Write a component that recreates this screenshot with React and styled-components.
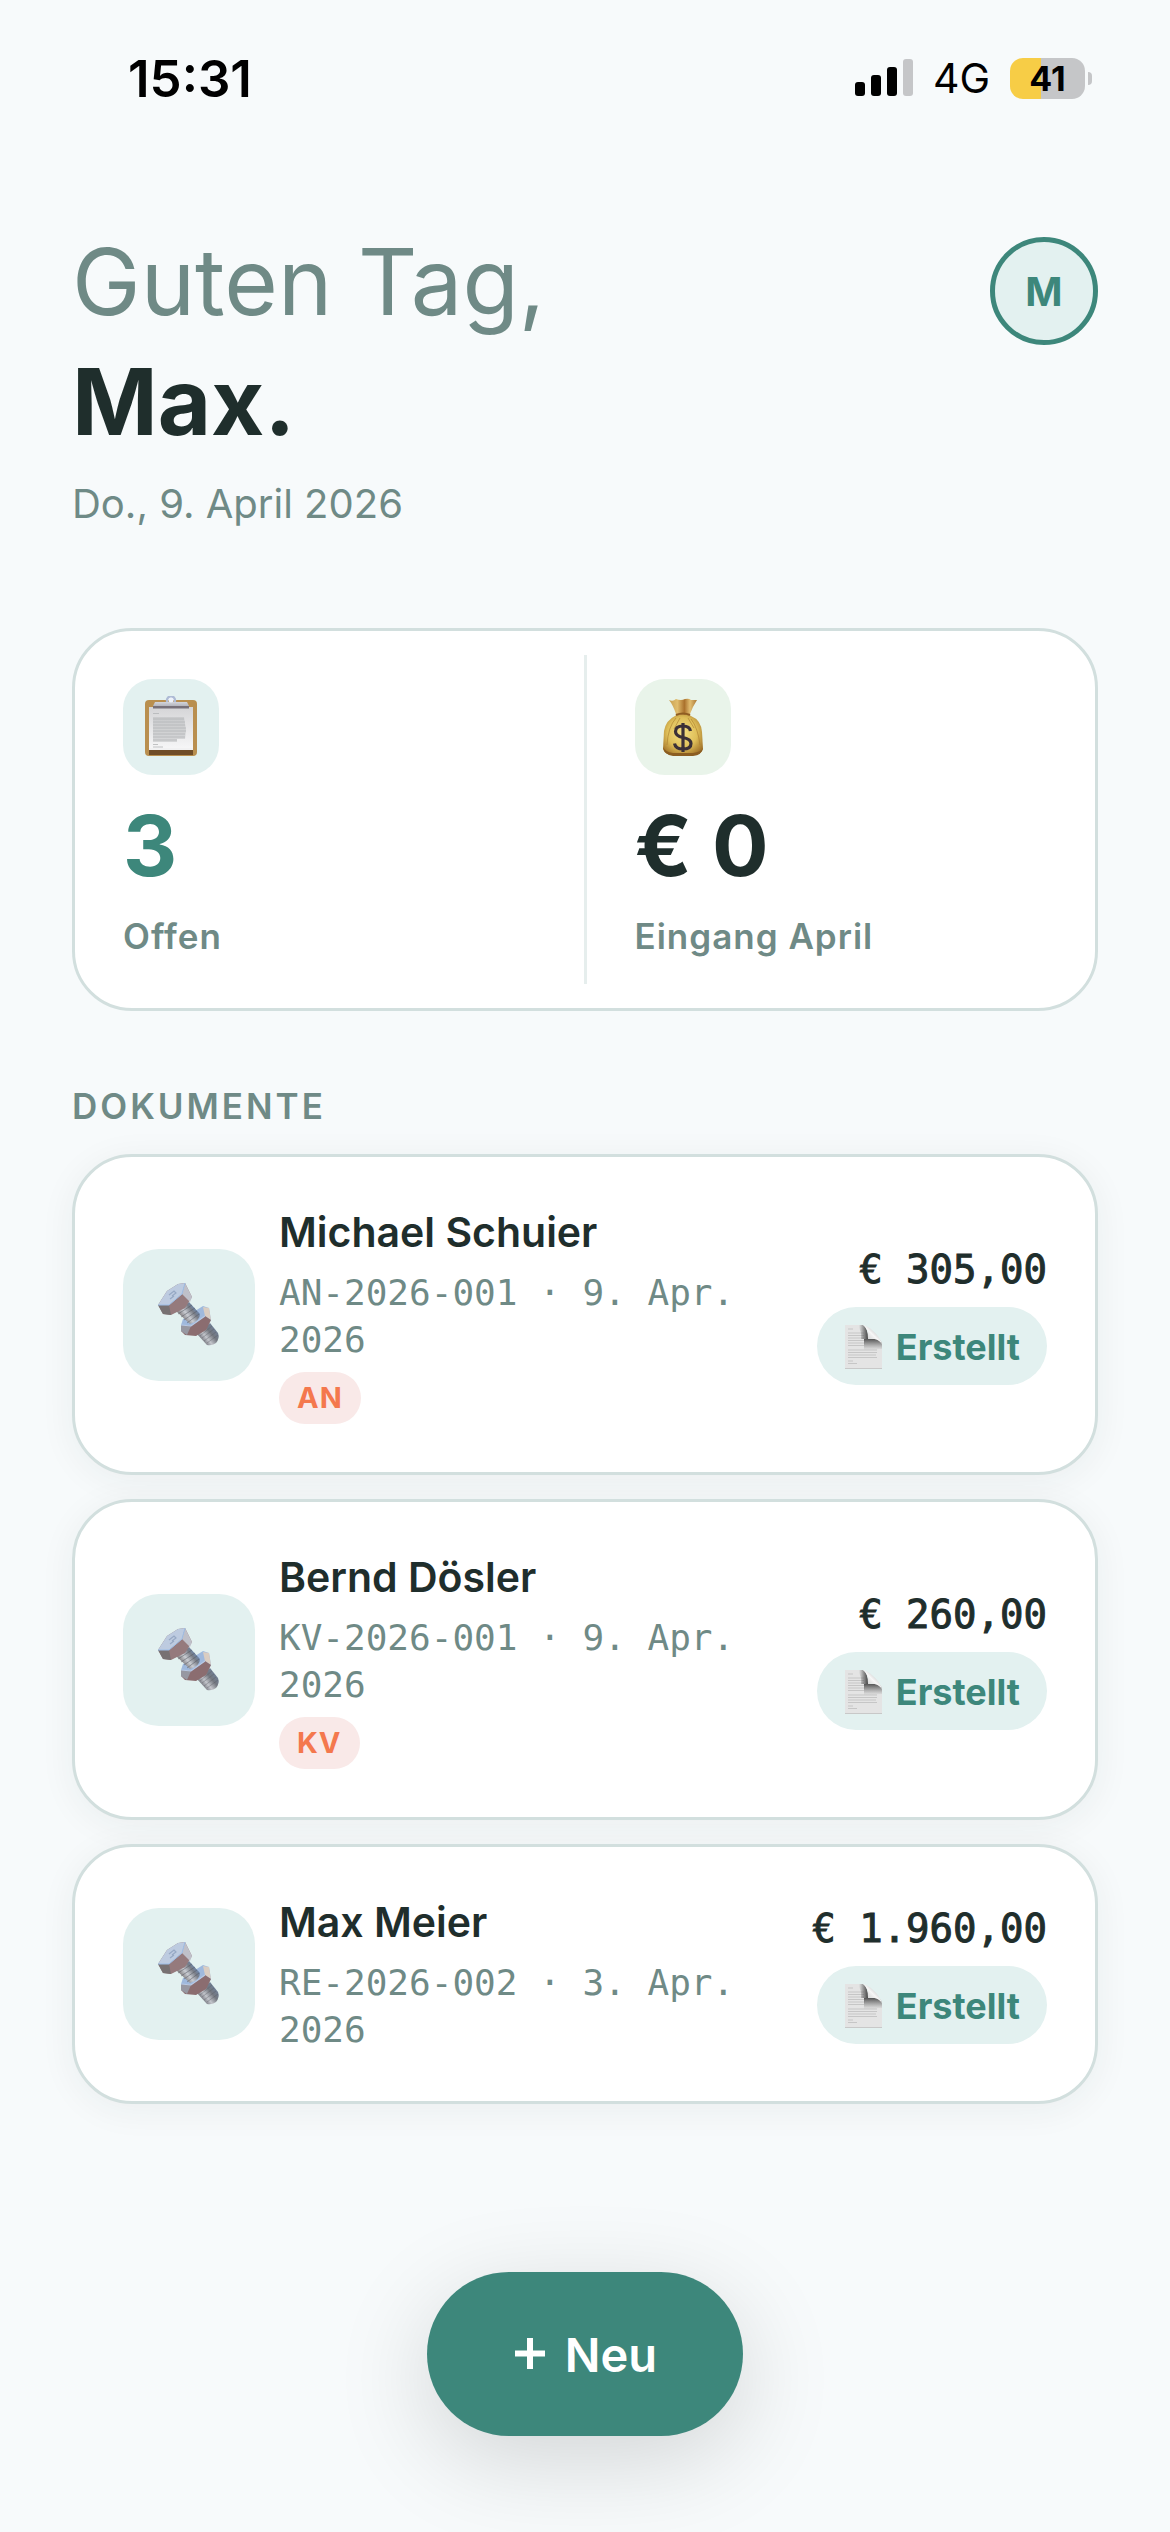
import React from 'react';
import styled, { createGlobalStyle } from 'styled-components';

const color = {
  page: '#f7fafb',
  card: '#ffffff',
  line: '#d2dfde',
  divider: '#e6eeed',
  ink: '#1f2e2c',
  muted: '#6f8a86',
  teal: '#3d877b',
  mint: '#e3f1f0',
  green: '#e9f4ea',
  orange: '#f4784d',
  blush: '#f9e9e8',
};

const sans = "Inter, 'Open Sans', sans-serif";
const mono = "'DejaVu Sans Mono', 'Liberation Mono', monospace";

const GlobalStyle = createGlobalStyle`
  *, *::before, *::after { box-sizing: border-box; }
  body {
    margin: 0;
    background: ${color.page};
    color: ${color.ink};
    font-family: ${sans};
    -webkit-font-smoothing: antialiased;
  }
  h1, h2, h3, p, ul { margin: 0; padding: 0; }
  ul { list-style: none; }
`;

const Screen = styled.div`
  display: flex;
  flex-direction: column;
  min-height: 100vh;
  padding-bottom: 96px;
`;

const StatusBar = styled.div`
  display: flex;
  align-items: center;
  justify-content: space-between;
  height: 156px;
  padding: 0 78px 0 128px;
  color: #000;
`;

const Clock = styled.time`
  font-size: 51px;
  font-weight: 600;
`;

const StatusIcons = styled.div`
  display: flex;
  align-items: center;
  gap: 20px;
`;

const Network = styled.span`
  font-size: 41px;
  line-height: 48px;
`;

const Battery = styled.div`
  display: flex;
  align-items: center;
  gap: 3px;
`;

const BatteryBody = styled.div`
  width: 75px;
  height: 41px;
  border-radius: 13px;
  background: linear-gradient(to right, #f7cd46 41%, #c5c6c8 41%);
  font-size: 34px;
  font-weight: 700;
  line-height: 41px;
  text-align: center;
`;

const BatteryTip = styled.div`
  width: 4px;
  height: 13px;
  border-radius: 0 6px 6px 0;
  background: #c5c6c8;
`;

const Main = styled.main`
  display: flex;
  flex-direction: column;
  padding: 66px 72px 0;
`;

const Header = styled.header`
  display: flex;
  align-items: flex-start;
  justify-content: space-between;
`;

const Greeting = styled.h1`
  color: ${color.muted};
  font-size: 92px;
  font-weight: 400;
  line-height: 120px;
`;

const GreetingName = styled.strong`
  display: block;
  color: ${color.ink};
  font-weight: 700;
`;

const Today = styled.p`
  margin-top: 12px;
  color: ${color.muted};
  font-size: 40px;
  line-height: 60px;
`;

const Avatar = styled.button`
  width: 108px;
  height: 108px;
  margin-top: 15px;
  padding: 0;
  border: 5px solid ${color.teal};
  border-radius: 50%;
  background: ${color.mint};
  color: ${color.teal};
  font: 700 40px ${sans};
`;

const Card = styled.div`
  border: 3px solid ${color.line};
  border-radius: 60px;
  background: ${color.card};
`;

const Stats = styled(Card)`
  display: grid;
  grid-template-columns: 1fr 3px 1fr;
  margin-top: 94px;
  padding: 24px 0;
`;

const StatDivider = styled.div`
  background: ${color.divider};
`;

const Stat = styled.section`
  display: flex;
  flex-direction: column;
  padding: 24px 48px;
`;

const IconTile = styled.div`
  display: flex;
  flex: none;
  align-items: center;
  justify-content: center;
  width: ${(p) => p.$size}px;
  height: ${(p) => p.$size}px;
  border-radius: ${(p) => (p.$size > 100 ? 36 : 30)}px;
  background: ${(p) => p.$tone || color.mint};
`;

const StatValue = styled.p`
  margin-top: 24px;
  color: ${(p) => p.$tone || color.ink};
  font-size: 84px;
  font-weight: 700;
  line-height: 94px;
`;

const StatLabel = styled.h2`
  margin-top: 19px;
  color: ${color.muted};
  font-size: 35px;
  font-weight: 600;
  line-height: 48px;
  letter-spacing: 1px;
`;

const SectionTitle = styled.h2`
  margin-top: 72px;
  color: ${color.muted};
  font-size: 35px;
  font-weight: 600;
  line-height: 47px;
  letter-spacing: 3px;
`;

const DocumentList = styled.ul`
  display: flex;
  flex-direction: column;
  gap: 24px;
  margin-top: 24px;
`;

const DocumentCard = styled(Card).attrs({ as: 'li' })`
  display: flex;
  align-items: center;
  gap: 24px;
  padding: 48px;
  box-shadow: 0 6px 36px rgba(31, 46, 44, 0.06);
`;

const DocumentInfo = styled.div`
  flex: 1;
  min-width: 0;
`;

const Customer = styled.h3`
  font-size: 41px;
  font-weight: 600;
  line-height: 55px;
`;

const Reference = styled.p`
  margin-top: 9px;
  color: ${color.muted};
  font-family: ${mono};
  font-size: 36px;
  line-height: 47px;
`;

const KindBadge = styled.span`
  display: block;
  width: fit-content;
  margin-top: 9px;
  padding: 0 18px;
  border-radius: 26px;
  background: ${color.blush};
  color: ${color.orange};
  font-size: 29px;
  font-weight: 700;
  line-height: 52px;
  letter-spacing: 1px;
`;

const DocumentSide = styled.div`
  display: flex;
  flex: none;
  flex-direction: column;
  align-items: flex-end;
  gap: 12px;
`;

const Amount = styled.p`
  font-family: ${mono};
  font-size: 39px;
  line-height: 50px;
  white-space: nowrap;
  -webkit-text-stroke: 1px ${color.ink};
`;

const StatusPill = styled.span`
  display: flex;
  align-items: center;
  gap: 12px;
  height: 78px;
  padding: 2px 27px 0;
  border-radius: 39px;
  background: ${color.mint};
  color: ${color.teal};
  font-size: 36px;
  font-weight: 700;
`;

const Footer = styled.footer`
  display: flex;
  justify-content: center;
  margin-top: auto;
`;

const NewButton = styled.button`
  display: flex;
  align-items: center;
  gap: 18px;
  height: 164px;
  padding: 0 86px;
  border: 0;
  border-radius: 82px;
  background: ${color.teal};
  box-shadow: 0 24px 96px rgba(0, 0, 0, 0.15);
  color: #fff;
  font: 600 47px ${sans};
`;

function SignalIcon() {
  return (
    <svg width="58" height="38" viewBox="0 0 58 38" aria-hidden="true">
      <rect x="0" y="23" width="10" height="14" rx="3" />
      <rect x="16" y="16" width="10" height="21" rx="3" />
      <rect x="32" y="8" width="10" height="29" rx="3" />
      <rect x="48" y="0" width="10" height="37" rx="3" fill="#c5c6c8" />
    </svg>
  );
}

function PlusIcon() {
  return (
    <svg width="34" height="36" viewBox="0 0 34 36" aria-hidden="true">
      <path d="M17 2V33M2 17.500H32" stroke="currentColor" strokeWidth="6" />
    </svg>
  );
}

function ClipboardIcon() {
  return (
    <svg width="54" height="62" viewBox="0 -1 54 62" aria-hidden="true">
      <defs>
        <linearGradient id="clip-paper" x1="0" y1="0" x2="0" y2="1">
          <stop offset="0" stopColor="#d5d5d7" />
          <stop offset="1" stopColor="#f7f7f8" />
        </linearGradient>
        <linearGradient id="clip-metal" x1="0" y1="0" x2="0" y2="1">
          <stop offset="0" stopColor="#d3d5dc" />
          <stop offset="1" stopColor="#b4b5bd" />
        </linearGradient>
      </defs>
      <rect x="1" y="3" width="52" height="56" rx="4" fill="#b98f4f" />
      <path d="M5 53H49V58H5Z" fill="#704d28" />
      <path d="M5 10H49V53H5Z" fill="url(#clip-paper)" />
      <path d="M5 51H49V53H5Z" fill="#f1f1f2" />
      <path d="M9 20H40L42 33L41 42H33V45H9Z" fill="#b4b5b7" opacity=".45" />
      <path
        d="M9 16.500H15M9 22H40M9 25H41M9 28H41M9 31H42M9 34H42M9 37H41M9 40H41M9 43H33M9 47.500H14M9 50H19"
        stroke="#b4b6b8"
        strokeWidth="1"
        opacity=".8"
      />
      <circle cx="27" cy="3.500" r="4" fill="none" stroke="#aebbd5" strokeWidth="2.500" />
      <path d="M11 5H43L45 9H9Z" fill="url(#clip-metal)" />
      <circle cx="27" cy="3" r="2.500" fill="#eef2fa" />
      <path d="M9 9H45V11.500H9Z" fill="#77717a" />
    </svg>
  );
}

function MoneyBagIcon() {
  return (
    <svg width="44" height="60" viewBox="0 0 44 60" aria-hidden="true">
      <defs>
        <radialGradient id="bag-body" cx=".48" cy=".45" r=".62">
          <stop offset="0" stopColor="#f3df83" />
          <stop offset=".6" stopColor="#dfbf59" />
          <stop offset="1" stopColor="#a4752a" />
        </radialGradient>
        <linearGradient id="bag-neck">
          <stop offset="0" stopColor="#c79f51" />
          <stop offset=".3" stopColor="#e1bd6d" />
          <stop offset=".55" stopColor="#aa712c" />
          <stop offset=".75" stopColor="#e2be71" />
          <stop offset="1" stopColor="#ad7935" />
        </linearGradient>
      </defs>
      <path d="M8 3Q12 5 15 2Q20 4 24 2Q28 1 30 3L36 3Q32 9 29 17L30 21H14L15 17Q12 8 8 3Z" fill="url(#bag-neck)" />
      <path
        d="M14 19Q22 16 30 19Q40 23 41 35L42 52Q40 58 32 58H12Q4 58 2 52L3 34Q5 23 14 19Z"
        fill="url(#bag-body)"
      />
      <path d="M2 50Q4 55 12 56H32Q40 55 42 51Q41 58 32 59H12Q3 58 2 50Z" fill="#8b5d22" />
      <path d="M15 18Q22 15 29 18" fill="none" stroke="#8f5d22" strokeWidth="2" />
      <path d="M15 21Q7 30 6 48M19 21L13 32M27 21L33 31M30 22Q37 31 39 48" fill="none" stroke="#a97c2d" strokeWidth="1" opacity=".6" />
      <path
        d="M29.500 34Q28.500 29 22 29Q14.500 29 14.500 34.500Q14.500 39 22 40.500Q30 42 30 46.500Q30 52 22 52Q14.500 52 13.500 46.500M22 26V55"
        fill="none"
        stroke="#3b3037"
        strokeWidth="3.200"
      />
    </svg>
  );
}

function BoltIcon() {
  return (
    <svg width="62" height="64" viewBox="0 0 62 64" aria-hidden="true">
      <defs>
        <linearGradient id="bolt-tip" gradientUnits="userSpaceOnUse" x1="42" y1="58" x2="58" y2="45">
          <stop offset="0" stopColor="#5f6069" />
          <stop offset=".35" stopColor="#c3c5cb" />
          <stop offset=".65" stopColor="#747880" />
          <stop offset="1" stopColor="#6f8099" />
        </linearGradient>
        <linearGradient id="bolt-shaft" gradientUnits="userSpaceOnUse" x1="23" y1="37" x2="39" y2="24">
          <stop offset="0" stopColor="#6a6465" />
          <stop offset=".4" stopColor="#c9ccd2" />
          <stop offset=".7" stopColor="#797d86" />
          <stop offset="1" stopColor="#6789b8" />
        </linearGradient>
      </defs>
      <path d="M39 51L52 40L60 50Q62 55 58 60Q54 63 49 62Z" fill="url(#bolt-tip)" />
      <path d="M42 53L54 43M44 55L56 46M46 58L58 49M49 60L60 52" stroke="#55585f" strokeWidth=".7" opacity=".5" />
      <path d="M37 28L45 23L51 25L53 37L46 47L33 44L23 42L25 36Z" fill="#9fb9dd" />
      <path d="M45 24L51 25L53 37L47 33Z" fill="#dacdc2" />
      <path d="M18 28L31 19L42 31Q42 38 32 41Z" fill="url(#bolt-shaft)" />
      <path d="M20 31L34 22M23 34L37 25M26 37L39 28M29 40L41 31" stroke="#50545d" strokeWidth=".8" opacity=".6" />
      <path d="M23 42L33 43L47 33L53 37L48 47L38 53L27 52L23 48Z" fill="#8b6d70" />
      <path d="M23 42L33 43L29 52L23 48Z" fill="#9798a2" />
      <path d="M23 42L33 43L47 33" fill="none" stroke="#b8cae5" strokeWidth="1.200" />
      <path d="M0 22L9 8L20 1L27 0L34 14L27 25L13 32L5 31Z" fill="#957a7d" />
      <path d="M0 22L9 8L20 1L27 0L24 11L11 22Z" fill="#bdcbe0" />
      <path d="M27 0L34 14L32 19L24 11Z" fill="#bfc0c9" />
      <path d="M0 22L11 22L13 32L5 31Z" fill="#777172" />
      <path d="M0 22L11 22L24 11L27 0" fill="none" stroke="#9dbde6" strokeWidth="1" />
      <path d="M11 12L16 8L18 10L14 13M12 16L16 13" fill="none" stroke="#96a8c4" strokeWidth="1.200" />
    </svg>
  );
}

function PageIcon() {
  return (
    <svg width="40" height="46" viewBox="0 0 40 46" aria-hidden="true">
      <defs>
        <linearGradient id="page-curl" gradientUnits="userSpaceOnUse" x1="24" y1="15" x2="33" y2="6">
          <stop offset="0" stopColor="#d5d5d5" />
          <stop offset=".5" stopColor="#f7f7f7" />
          <stop offset="1" stopColor="#c4c4c4" />
        </linearGradient>
        <linearGradient id="page-shade-left" gradientUnits="userSpaceOnUse" x1="15" y1="0" x2="24" y2="0">
          <stop offset="0" stopColor="#444" stopOpacity="0" />
          <stop offset="1" stopColor="#444" />
        </linearGradient>
        <linearGradient id="page-shade-down" gradientUnits="userSpaceOnUse" x1="0" y1="15" x2="0" y2="26">
          <stop offset="0" stopColor="#555" />
          <stop offset="1" stopColor="#777" stopOpacity="0" />
        </linearGradient>
      </defs>
      <path d="M1 1H19Q23 2 24 15L34 15Q38 17 38 21V45H1Z" fill="#e4e4e4" />
      <path d="M1 44H38V45H1Z" fill="#c8c8c8" />
      <path
        d="M4 5H9M4 9H20M4 11.500H20M4 14H20M4 16.500H21M4 19H21M4 21.500H20M4 26H33M4 28.500H33M4 31H32M4 33.500H33M4 37H9M4 39.500H13"
        stroke="#c6c6c6"
        strokeWidth="1"
      />
      <path d="M13 1H19Q24 4 24 15H17Q18 7 13 1Z" fill="url(#page-shade-left)" />
      <path d="M20 15H33Q38 16 38 21V25L20 27Z" fill="url(#page-shade-down)" />
      <path d="M19 1Q25 5 24 15Q34 14 38 20Q36 13 29 7Q24 2 19 1Z" fill="url(#page-curl)" />
    </svg>
  );
}

const documents = [
  { customer: 'Michael Schuier', reference: 'AN-2026-001', date: '9. Apr. 2026', kind: 'AN', amount: '€ 305,00' },
  { customer: 'Bernd Dösler', reference: 'KV-2026-001', date: '9. Apr. 2026', kind: 'KV', amount: '€ 260,00' },
  { customer: 'Max Meier', reference: 'RE-2026-002', date: '3. Apr. 2026', amount: '€ 1.960,00' },
];

export default function App() {
  return (
    <Screen>
      <GlobalStyle />
      <StatusBar>
        <Clock>15:31</Clock>
        <StatusIcons>
          <SignalIcon />
          <Network>4G</Network>
          <Battery>
            <BatteryBody>41</BatteryBody>
            <BatteryTip />
          </Battery>
        </StatusIcons>
      </StatusBar>

      <Main>
        <Header>
          <div>
            <Greeting>
              Guten Tag,
              <GreetingName>Max.</GreetingName>
            </Greeting>
            <Today>Do., 9. April 2026</Today>
          </div>
          <Avatar type="button">M</Avatar>
        </Header>

        <Stats>
          <Stat>
            <IconTile $size={96}>
              <ClipboardIcon />
            </IconTile>
            <StatValue $tone={color.teal}>3</StatValue>
            <StatLabel>Offen</StatLabel>
          </Stat>
          <StatDivider />
          <Stat>
            <IconTile $size={96} $tone={color.green}>
              <MoneyBagIcon />
            </IconTile>
            <StatValue>€ 0</StatValue>
            <StatLabel>Eingang April</StatLabel>
          </Stat>
        </Stats>

        <SectionTitle>DOKUMENTE</SectionTitle>
        <DocumentList>
          {documents.map((doc) => (
            <DocumentCard key={doc.reference}>
              <IconTile $size={132}>
                <BoltIcon />
              </IconTile>
              <DocumentInfo>
                <Customer>{doc.customer}</Customer>
                <Reference>{`${doc.reference} · ${doc.date}`}</Reference>
                {doc.kind && <KindBadge>{doc.kind}</KindBadge>}
              </DocumentInfo>
              <DocumentSide>
                <Amount>{doc.amount}</Amount>
                <StatusPill>
                  <PageIcon />
                  Erstellt
                </StatusPill>
              </DocumentSide>
            </DocumentCard>
          ))}
        </DocumentList>
      </Main>

      <Footer>
        <NewButton type="button">
          <PlusIcon />
          Neu
        </NewButton>
      </Footer>
    </Screen>
  );
}
